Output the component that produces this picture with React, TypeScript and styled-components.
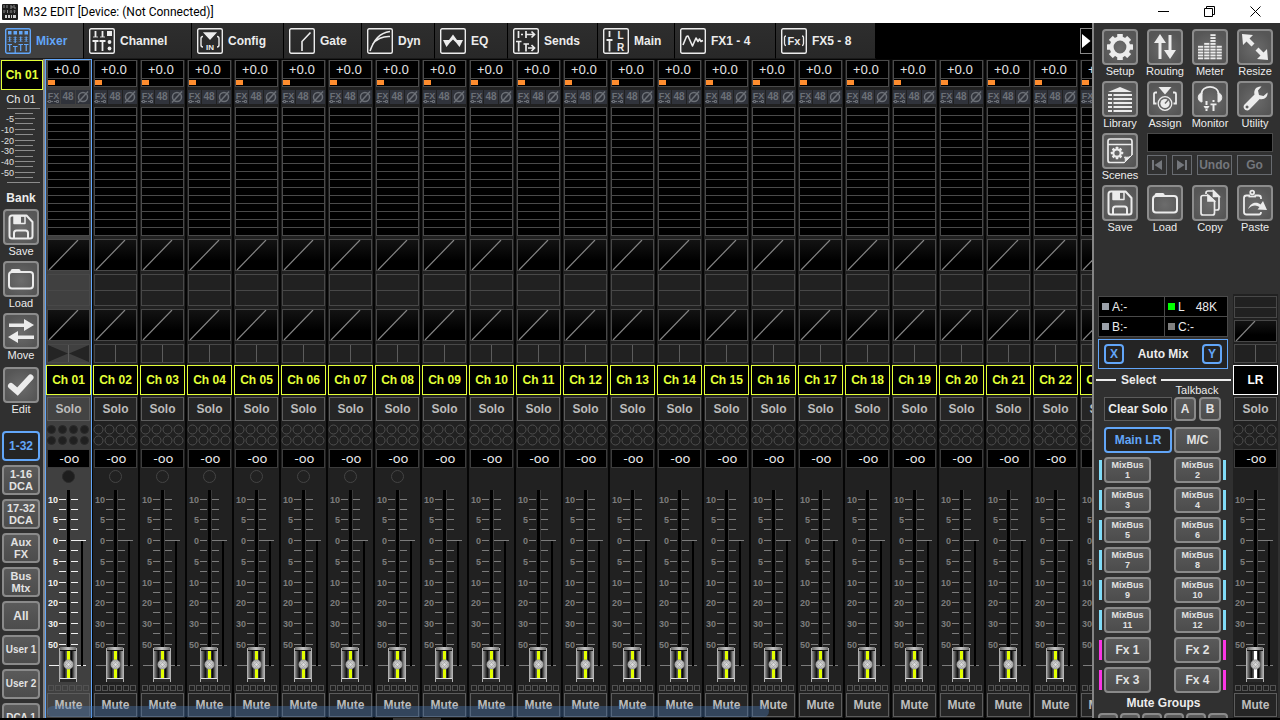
import React from "react";
import styled, { createGlobalStyle, css } from "styled-components";

const sans = '"Liberation Sans", Arial, sans-serif';
const readout = '"Noto Sans", "Open Sans", sans-serif';
const lime = "#e4ff37";
const blue = "#62a6f8";

const GlobalStyle = createGlobalStyle`
  * { box-sizing: border-box; }
  body { margin: 0; background: #000; overflow: hidden; }
  button { padding: 0; margin: 0; border: 0; background: none; color: inherit; font: inherit; cursor: pointer; }
  svg { display: block; }
`;

/* ---------- frame ---------- */

const Window = styled.div`
  display: flex;
  flex-direction: column;
  height: 100vh;
  overflow: hidden;
  background: #000;
  color: #ececec;
  font: bold 12px/14px ${sans};
`;

const TitleBar = styled.header`
  display: flex;
  align-items: center;
  flex: none;
  height: 23px;
  padding: 0 2px;
  gap: 5px;
  background: #fff;
  color: #000;
`;

const Title = styled.h1`
  flex: 1;
  margin: 0;
  font: normal 12px/20px Roboto, "Open Sans", sans-serif;
`;

const WindowButton = styled.button`
  display: grid;
  place-items: center;
  width: 46px;
  height: 20px;
`;

const Body = styled.div`
  display: flex;
  flex: 1;
  min-height: 0;
`;

const Workspace = styled.main`
  display: flex;
  flex-direction: column;
  flex: 1;
  min-width: 0;
`;

const TabBar = styled.nav`
  display: flex;
  flex: none;
  height: 36px;
`;

const Tab = styled.button<{ $width: number; $active?: boolean }>`
  display: flex;
  align-items: center;
  flex: none;
  gap: 5px;
  width: ${(p) => p.$width}px;
  padding-left: 5px;
  border-right: 1px solid #000;
  border-bottom: 1px solid #1a1a1a;
  background: ${(p) => (p.$active ? "#404040" : "linear-gradient(#2e2e2e, #282828)")};
  color: ${(p) => (p.$active ? blue : "#ececec")};
  white-space: nowrap;
`;

const ScrollTabs = styled.button`
  display: grid;
  place-items: center;
  width: 12px;
  height: 26px;
  margin: 5px 0 0 auto;
  border: 1px solid #8a8a8a;
  border-right: 0;
  background: #000;
`;

const Desk = styled.div`
  display: flex;
  flex: 1;
  min-height: 0;
`;

const BottomBar = styled.footer`
  flex: none;
  height: 2px;
  padding-left: 393px;
  background: #000;
`;

const ScrollThumb = styled.div`
  width: 48px;
  height: 2px;
  background: #333;
`;

/* ---------- shared parts ---------- */

const NameBox = styled.div<{ $color?: string }>`
  display: grid;
  place-items: center;
  width: 45px;
  height: 30px;
  border: 1px solid ${(p) => p.$color ?? lime};
  background: #000;
  color: ${(p) => p.$color ?? lime};
  white-space: nowrap;
`;

const Tool = styled.button`
  display: flex;
  flex-direction: column;
  align-items: center;
  width: 36px;
  height: 48px;
  font: normal 11px/12px ${sans};
  white-space: nowrap;
`;

const ToolFace = styled.span`
  display: block;
  flex: none;
  width: 36px;
  height: 36px;
  border: 2px solid #8c8c8c;
  border-radius: 4px;
  background: radial-gradient(circle at 50% 55%, #6c6c6c, #565656 75%);
`;

const Key = styled.button<{ $w: number; $h: number; $on?: boolean; $size?: number }>`
  display: grid;
  place-items: center;
  flex: none;
  width: ${(p) => p.$w}px;
  height: ${(p) => p.$h}px;
  border: 2px solid ${(p) => (p.$on ? blue : "#8a8a8a")};
  border-radius: 4px;
  background: ${(p) => (p.$on ? "#242424" : "linear-gradient(#5a5a5a, #4c4c4c)")};
  color: ${(p) => (p.$on ? blue : "#e2e2e2")};
  font-size: ${(p) => p.$size ?? 12}px;
  line-height: ${(p) => (p.$size === 9 ? 10 : 12)}px;
  white-space: pre;
  text-align: center;
`;

/* ---------- sidebar ---------- */

const Sidebar = styled.aside`
  display: flex;
  flex-direction: column;
  align-items: center;
  flex: none;
  width: 45px;
  padding: 1px 2px 0 1px;
  border-right: 2px solid #858585;
  background: #303030;
  overflow: hidden;

  > * {
    flex: none;
  }
`;

const SideNameBox = styled(NameBox)`
  align-self: flex-start;
  width: 42px;
`;

const SideName = styled.div`
  padding: 2px 0;
  font-weight: normal;
  font-size: 11px;
  line-height: 14px;
  text-align: center;
`;

const BankTitle = styled.h2`
  margin: 7px 0 4px;
  font-size: 12px;
  line-height: 14px;
`;

const Stack = styled.div<{ $gap: number; $top?: number }>`
  display: flex;
  flex-direction: column;
  align-items: center;
  gap: ${(p) => p.$gap}px;
  margin-top: ${(p) => p.$top ?? 0}px;
`;

/* ---------- channel strip ---------- */

const Strips = styled.section`
  position: relative;
  display: flex;
  flex: 1;
  gap: 2px;
  min-width: 0;
  padding: 1px 0 0 1px;
  background: #050505;
  overflow: hidden;
`;

const StripBox = styled.article<{ $selected?: boolean }>`
  display: flex;
  flex-direction: column;
  align-items: center;
  flex: none;
  width: 45px;
  background: ${(p) => (p.$selected ? "#404040" : "#212121")};
  color: #bdbdbd;
  ${(p) => p.$selected && css`box-shadow: 0 0 0 1px ${blue};`}

  > * {
    flex: none;
  }
`;

const Gain = styled.div`
  width: 43px;
  height: 27px;
  border: 1px solid #4a4a4a;
  background: #000;
  color: #e4e4e4;
`;

const GainValue = styled.div`
  height: 17px;
  padding-right: 3px;
  font: normal 13px/16px ${readout};
  text-align: center;
`;

const GainBar = styled.div`
  height: 8px;
  padding-top: 1px;
  border-top: 1px solid #4a4a4a;
`;

const GainFill = styled.div`
  width: 7px;
  height: 5px;
  background: #ff8d2e;
`;

const Flags = styled.div`
  display: grid;
  grid-template-columns: 13px 14px 14px;
  gap: 1px;
  width: 43px;
  height: 14px;
  margin: 3px 0;
  color: #6c7077;
`;

const Flag = styled.div`
  display: grid;
  place-items: center;
  background: #30333b;
  font-size: 10px;
  line-height: 14px;
`;

const Bands = styled.div`
  width: 43px;
  height: 129px;
  border: 1px solid #4a4a4a;
  background: repeating-linear-gradient(#000 0 7px, #4a4a4a 7px 8px);
`;

const Panel = styled.div<{ $h: number; $black?: boolean; $top: number }>`
  width: 43px;
  height: ${(p) => p.$h}px;
  margin-top: ${(p) => p.$top}px;
  border: 1px solid #484848;
  background: ${(p) => (p.$black ? "linear-gradient(#131313, #000 70%)" : "transparent")};
`;

const FlatButton = styled.button`
  display: grid;
  place-items: center;
  width: 43px;
  height: 24px;
  margin: 2px 0;
  border: 1px solid #5c5c5c;
  background: rgba(255, 255, 255, 0.02);
  color: #bdbdbd;
`;

const Level = styled.div`
  width: 43px;
  height: 19px;
  padding-left: 2px;
  border: 1px solid #3c3c3c;
  background: #000;
  color: #ececec;
  font: normal 13px/16px ${readout};
  text-align: center;
`;

const FaderBox = styled.label`
  position: relative;
  display: block;
  width: 45px;
  height: 217px;
`;

const FaderInput = styled.input`
  position: absolute;
  inset: 22px 12px 3px 12px;
  width: 21px;
  height: 192px;
  margin: 0;
  opacity: 0;
  writing-mode: vertical-lr;
  direction: rtl;
`;

const Highlight = styled.div`
  position: absolute;
  left: 2px;
  bottom: 1px;
  width: 69%;
  height: 11px;
  border-radius: 6px;
  background: rgba(72, 118, 176, 0.4);
  pointer-events: none;
`;

/* ---------- control panel ---------- */

const Controls = styled.aside`
  display: flex;
  flex-direction: column;
  flex: none;
  width: 188px;
  border-left: 2px solid #858585;
  background: #303030;
  overflow: hidden;
`;

const ToolGrid = styled.div`
  display: grid;
  grid-template-columns: repeat(4, 36px);
  gap: 4px 9px;
  flex: none;
  height: 271px;
  align-content: start;
  padding: 6px 0 0 8px;
`;

const SceneArea = styled.div`
  grid-column: 2 / -1;
  display: flex;
  flex-direction: column;
  gap: 3px;
`;

const SceneName = styled.output`
  height: 19px;
  border: 1px solid #4a4a4a;
  background: #000;
`;

const Row = styled.div<{ $gap?: number }>`
  display: flex;
  gap: ${(p) => p.$gap ?? 0}px;
`;

const SceneButton = styled.button<{ $w: number }>`
  display: grid;
  place-items: center;
  width: ${(p) => p.$w}px;
  height: 20px;
  border: 1px solid #686b70;
  color: #74777c;
`;

const Lower = styled.div`
  display: flex;
  flex: 1;
  min-height: 0;
`;

const Routing = styled.section`
  flex: none;
  width: 139px;
  padding: 2px 4px 0;
`;

const Status = styled.div`
  display: grid;
  grid-template-columns: 65px 62px;
  grid-auto-rows: 19px;
  gap: 1px;
  width: 130px;
  height: 41px;
  border: 1px solid #4a4a4a;
  background: #4a4a4a;
  font-weight: normal;
`;

const StatusCell = styled.div`
  display: flex;
  align-items: center;
  gap: 3px;
  padding-left: 3px;
  background: #000;
`;

const SampleRate = styled.span`
  margin-left: 8px;
`;

const Led = styled.span<{ $color: string }>`
  width: 7px;
  height: 7px;
  background: ${(p) => p.$color};
`;

const AutoMix = styled.div`
  display: flex;
  align-items: center;
  justify-content: space-between;
  width: 130px;
  height: 30px;
  margin-top: 2px;
  padding: 0 5px;
  border: 1px solid ${blue};
  background: #242424;
`;

const SelectTitle = styled.h2`
  display: flex;
  align-items: center;
  gap: 5px;
  width: 135px;
  margin: 4px 0 0 -2px;
  font-size: 12px;
  line-height: 14px;

  &::before,
  &::after {
    content: "";
    width: 20px;
    height: 2px;
    background: #ececec;
  }
  &::after {
    flex: 1;
  }
`;

const TalkbackTitle = styled.div`
  width: 46px;
  margin: -2px 0 1px 76px;
  font: normal 11px/11px ${sans};
  text-align: center;
`;

const ClearSolo = styled.button`
  width: 68px;
  height: 24px;
  margin-right: 2px;
  border: 1px solid #5c5c5c;
  background: #262626;
  white-space: nowrap;
`;

const KeyRow = styled.div<{ $top: number }>`
  display: flex;
  margin: ${(p) => p.$top}px 0 0 6px;
`;

const BusRow = styled.div`
  display: flex;
  align-items: center;
  justify-content: space-between;
  width: 127px;
  margin: 4px 0 0 1px;
`;

const BusGroup = styled.div`
  display: flex;
  align-items: center;
  gap: 2px;
`;

const BusMark = styled.span<{ $color: string }>`
  width: 3px;
  height: 20px;
  background: ${(p) => p.$color};
`;

const MuteTitle = styled.h2`
  margin: 3px 0 3px;
  font-size: 12px;
  line-height: 14px;
  text-align: center;
`;

/* ---------- drawings ---------- */

type Art = React.ReactNode;

const teeth = (cx: number, cy: number, r: number, w: number, h: number) =>
  [0, 45, 90, 135, 180, 225, 270, 315].map((a) => (
    <rect key={a} x={cx - w / 2} y={cy - r} width={w} height={h} rx="0.5" fill="currentColor" stroke="none" transform={`rotate(${a} ${cx} ${cy})`} />
  ));

const meterBars = [5, 6, 9, 5].flatMap((n, c) =>
  Array.from({ length: n }, (_, r) => <rect key={`${c}-${r}`} x={6 + c * 6.2} y={28.4 - r * 2.9} width="5.2" height="1.9" />)
);

const toolArt: Record<string, Art> = {
  Setup: (
    <g>
      <circle cx="18" cy="18" r="8.4" fill="none" stroke="currentColor" strokeWidth="4" />
      {teeth(18, 18, 13, 5.6, 4)}
    </g>
  ),
  Routing: <path d="M11.5 30V14H7L13 5l6 9h-4.500V30zM21.500 6v15H17l6 9 6-9h-4.500V6z" fill="currentColor" />,
  Meter: <g fill="currentColor">{meterBars}</g>,
  Resize: <path d="M5 5l11 1-3.500 3.500 5 5-3 3-5-5L6 16zM31 31l-11-1 3.500-3.500-5-5 3-3 5 5L30 20z" fill="currentColor" />,
  Library: (
    <g fill="currentColor">
      <path d="M6 11L18 6l12 5z" />
      {[13, 17, 21, 25, 29].map((y) => (
        <path key={y} d={`M6 ${y}h4v1.900h-4zM11.500 ${y}h18.500v1.900h-18.500z`} />
      ))}
    </g>
  ),
  Assign: (
    <g fill="none" stroke="currentColor" strokeWidth="1.800">
      <path d="M11.500 6h13L18 13.500z" fill="currentColor" stroke="none" />
      <circle cx="18" cy="22.500" r="6.800" strokeWidth="1.300" />
      <circle cx="18" cy="22.500" r="4.600" fill="currentColor" stroke="none" />
      <path d="M18 22.500l4-4.500" stroke="#666" strokeWidth="1.300" />
      <path d="M10 11.500H8.500Q7 11.500 7 13v9.500h2.500M26 11.500h1.500q1.500 0 1.500 1.500v9.500h-2.500" />
    </g>
  ),
  Monitor: (
    <g fill="none" stroke="currentColor" strokeWidth="1.600">
      <path d="M9.500 13C9.500 3.500 26.500 3.500 26.500 13" />
      <path d="M10 12c-5 0-5 9 0 9zM26 12c5 0 5 9 0 9z" fill="currentColor" strokeWidth="1" />
      <path d="M14.500 20v4M21.500 23v7M14.500 28v2M21.500 19v2" strokeWidth="2" />
      <path d="M11.500 25h6l-1.500 2.500h-3zM18.500 22.500h6v1.800h-6z" fill="currentColor" stroke="none" />
    </g>
  ),
  Utility: (
    <path
      d="M30.500 11.500c.6 4-2.800 7.500-7.800 6.500L12.500 28.500c-3 3-8-1.500-5-5L17.500 13.500c-1.200-5 2.500-8.800 7-8l-3.500 4 1 4.500 4.500 1zM10 24.500a1.500 1.500 0 1 0 .1 0z"
      fill="currentColor"
      fillRule="evenodd"
    />
  ),
  Scenes: (
    <g fill="none" stroke="currentColor" strokeWidth="1.700">
      <path d="M22 29.500H8q-2 0-2-2V8.500q0-2.500 2-2.500h20q2 0 2 2.500V22M6 11.500h24" />
      <path d="M22 30c2-2 1.500-4 .5-6 3 .5 5.500.5 7.500-2z" fill="currentColor" strokeWidth="1" />
      <circle cx="15" cy="20" r="3.600" strokeWidth="2" />
      {teeth(15, 20, 6.2, 2.6, 2.4)}
    </g>
  ),
  Save: (
    <g fill="none" stroke="currentColor" strokeWidth="2" strokeLinejoin="round">
      <path d="M9 6.500h14.500L29.500 13v14q0 2.500-2.500 2.500H9q-2.500 0-2.500-2.500V9q0-2.500 2.500-2.500z" />
      <path d="M11 29v-5q0-2.500 2.500-2.500h9q2.500 0 2.500 2.500v5" />
      <path d="M11 7v7.500h11V7z" strokeWidth="1.500" />
      <path d="M11 7h7v7.500h-7z" fill="currentColor" stroke="none" />
    </g>
  ),
  Load: (
    <g fill="none" stroke="currentColor" strokeWidth="2">
      <rect x="6" y="11" width="24" height="16.500" rx="3" />
      <path d="M7.500 11q0-3 2-3h6.500q1.500 0 2 3z" fill="currentColor" stroke="none" />
    </g>
  ),
  Copy: (
    <g fill="none" stroke="currentColor" strokeWidth="1.700">
      <path d="M14 9V8q0-2 2-2h5.500l5.500 5.500V23q0 2-2 2h-2.500" />
      <path d="M21.500 6v5.500H27z" fill="currentColor" />
      <path d="M16.500 10.500H11q-2 0-2 2V28q0 2 2 2h9.500q2 0 2-2V16z" />
      <path d="M16 10.500V16h6z" fill="currentColor" />
    </g>
  ),
  Paste: (
    <g fill="none" stroke="currentColor" strokeWidth="1.800">
      <path d="M13 10.500H9.500q-2.500 0-2.500 2.500v14q0 2.500 2.500 2.500H22q2 0 2-2.500M17.500 10.500h4q2.500 0 2.500 2.500v1" />
      <circle cx="15.200" cy="7.500" r="1.900" />
      <path d="M11.500 11.500h7.500" />
      <path d="M11 24c3-7 9-7.500 12.500-4.500L26 16l4 9-9.500-.5 2-2.500C19 19.500 15 20 11 24z" fill="currentColor" stroke="none" />
    </g>
  ),
  Move: <path d="M6 10.500h15V6l10 6-10 6v-4H6zM31 22.500H15V18L5 24l10 6v-4h16z" fill="currentColor" />,
  Edit: <path d="M8 19l6.500 5.500L27.500 10.500" fill="none" stroke="currentColor" strokeWidth="6" strokeLinecap="round" />,
};

const ToolButton = ({ name }: { name: string }) => (
  <Tool type="button">
    <ToolFace>
      <svg width="32" height="32" viewBox="2 2 32 32" aria-hidden="true">
        {toolArt[name]}
      </svg>
    </ToolFace>
    {name}
  </Tool>
);

const glyphText = (x: number, y: number, size: number, t: string) => (
  <text x={x} y={y} fontSize={size} fontFamily="Liberation Sans, sans-serif" fontWeight="bold" textAnchor="middle" fill="currentColor" stroke="none">
    {t}
  </text>
);

const tabs: { name: string; width: number; art: Art }[] = [
  {
    name: "Mixer",
    width: 84,
    art: (
      <g>
        {[3, 8.5, 14, 19.5].map((x, i) => (
          <g key={x}>
            <rect x={x} y="3" width="3.500" height="3.500" fill="currentColor" stroke="none" />
            <path d={`M${x + 1.7} 8.500V${i === 1 ? 15 : 13.5}M${x + 1.7} ${i === 1 ? 19 : 17}v6M${x - 0.5} ${i === 1 ? 18.5 : 16.5}h4.500`} strokeWidth="1.200" />
            <path d={`M${x - 0.3} 9.500h4M${x - 0.3} 11.500h4M${x - 0.3} 13.500h4`} strokeWidth="0.400" />
          </g>
        ))}
      </g>
    ),
  },
  {
    name: "Channel",
    width: 108,
    art: (
      <g strokeWidth="1.800">
        <path d="M6.500 3v6M3.500 13h6M6.500 13v10M13.500 3v6M10.500 13h6M13.500 13v10" />
        <path d="M4 9h5M11 9h5" strokeWidth="0.800" />
        <path d="M18 3h5v5h-5z" fill="currentColor" stroke="none" />
        <circle cx="20.500" cy="14" r="1.900" fill="currentColor" stroke="none" />
        <circle cx="20.500" cy="20.500" r="1.900" fill="currentColor" stroke="none" />
      </g>
    ),
  },
  {
    name: "Config",
    width: 92,
    art: (
      <g>
        <path d="M7.500 5h11L13 11z" fill="currentColor" />
        <path d="M6 8.500Q4 8.500 4 10.500v6.500Q4 19 6 19M20 8.500q2 0 2 2v6.500q0 2-2 2" />
        {glyphText(13, 21.5, 8, "IN")}
      </g>
    ),
  },
  { name: "Gate", width: 78, art: <path d="M13 23v-9.500L21.500 4.500" strokeWidth="1.600" /> },
  { name: "Dyn", width: 73, art: <path d="M3 23C7 12 12 5 23 3.500M5.500 16.500C9 11 16 8 23 8.500" strokeWidth="1.600" /> },
  { name: "EQ", width: 73, art: <path d="M3 12h6l4-5.500L17 12h6l-3.500 7-3.500-4.500L13 11.500l-3 3L6.500 19z" fill="currentColor" stroke="none" /> },
  {
    name: "Sends",
    width: 90,
    art: (
      <g strokeWidth="1.700">
        <path d="M5.500 3v7M8 6.500h2M13 3v7M13 6.500h8M18.500 3.500l3 3-3 3" />
        <path d="M3 13.500h5.500M5.700 13.500v10M10.500 16h5.500M13 16v7.500M15 20h6M18.500 17l3 3-3 3" />
      </g>
    ),
  },
  {
    name: "Main",
    width: 77,
    art: (
      <g>
        <path d="M6.500 3v6M3.500 12h6M6.500 12v11.500" strokeWidth="1.800" />
        {glyphText(17.5, 11, 10, "L")}
        {glyphText(17.5, 22.5, 10, "R")}
      </g>
    ),
  },
  { name: "FX1 - 4", width: 101, art: <path d="M3 17L6.500 8.500l1.500-.5 4.500 10L16 10l2 3.500 1.500-2.500 1.500 2.500 2-1" strokeWidth="1.600" strokeLinejoin="round" /> },
  {
    name: "FX5 - 8",
    width: 100,
    art: (
      <g>
        <path d="M5 8Q3.500 8 3.500 9.500v6Q3.500 17.500 5 17.500M21 8q1.500 0 1.500 1.500v6q0 2-1.500 2" strokeWidth="1.300" />
        {glyphText(13, 17, 11, "Fx")}
      </g>
    ),
  },
];

const AppIcon = () => (
  <svg width="16" height="16" viewBox="0 0 16 16" aria-hidden="true">
    <rect width="16" height="16" rx="1" fill="#1c1c1c" />
    <path d="M2 1v3M5 1v3M8 2h2v2H8M12 1v3h2M2 6v3M5.500 6v3M9 6v3M12.500 6v3" stroke="#8a8a8a" strokeWidth="1" fill="none" />
    <path d="M1 7h3M7.500 8h3M11 7h3" stroke="#555" />
    <path d="M3 12.500h2M6 12.500h2M9 12.500h1M11 12.500h3" stroke="#d0d0d0" strokeWidth="3" />
  </svg>
);

const SharedDefs = () => (
  <svg width="0" height="0" style={{ position: "absolute" }} aria-hidden="true">
    <defs>
      <linearGradient id="cap-metal" x1="0" x2="1" y1="0" y2="0">
        <stop offset="0" stopColor="#c4c4c4" />
        <stop offset="0.1" stopColor="#777" />
        <stop offset="0.3" stopColor="#101010" />
        <stop offset="0.42" stopColor="#5a5a5a" />
        <stop offset="0.58" stopColor="#5a5a5a" />
        <stop offset="0.7" stopColor="#050505" />
        <stop offset="0.88" stopColor="#8e8e8e" />
        <stop offset="1" stopColor="#bdbdbd" />
      </linearGradient>
      <linearGradient id="cap-edge" x1="0" x2="1" y1="0" y2="0">
        <stop offset="0" stopColor="#6a6a6a" />
        <stop offset="0.5" stopColor="#c8c8c8" />
        <stop offset="1" stopColor="#6a6a6a" />
      </linearGradient>
      <radialGradient id="cap-knob">
        <stop offset="0" stopColor="#e2e2e2" />
        <stop offset="0.7" stopColor="#bcbcbc" />
        <stop offset="1" stopColor="#8c8c8c" />
      </radialGradient>
    </defs>
  </svg>
);

const marks: [number, string][] = [
  [32, "10"],
  [52, "5"],
  [73, "0"],
  [94, "5"],
  [115, "10"],
  [135, "20"],
  [156, "30"],
  [177, "50"],
];
const minor = [42, 62, 83, 104, 125, 145, 166];

const Fader = ({ label, lit, dot, stripe }: { label: string; lit?: boolean; dot?: boolean; stripe: string }) => {
  const ink = lit ? "#f0f0f0" : "#7c7c7c";
  return (
    <FaderBox>
      <svg width="45" height="217" viewBox="0 0 45 217" aria-hidden="true">
        {dot && <circle cx="22.500" cy="8.500" r="6" fill={lit ? "#1e1e1e" : "none"} stroke={lit ? "#2a2a2a" : "#444"} />}
        <g fill={ink}>
          {minor.map((y) => (
            <path key={y} d={`M13 ${y - 1}h7v1h-7zM25 ${y - 1}h7v1h-7z`} />
          ))}
          {marks.map(([y]) => (
            <path key={y} d={`M13 ${y - 1}h7v1h-7zM25 ${y - 1}h${y === 73 ? 15 : 7}v1h-${y === 73 ? 15 : 7}z`} />
          ))}
          <rect x="3" y="197" width="37" height="1" />
        </g>
        <g fill={ink} fontFamily='"Liberation Sans", sans-serif' fontSize="9" fontWeight="bold" textAnchor="end">
          {marks.map(([y, t]) => (
            <text key={y} x="12" y={y + 3}>
              {t}
            </text>
          ))}
        </g>
        <rect x="21" y="22" width="3" height="160" fill="#000" />
        {!lit && <rect x="24" y="22" width="1" height="160" fill="#3a3a3a" />}
        <rect x="35" y="73" width="2" height="125" fill="#000" />
        <rect x="13" y="180" width="18" height="34" fill="url(#cap-metal)" />
        <rect x="14" y="179" width="16" height="3" fill="url(#cap-edge)" />
        <rect x="14" y="182" width="16" height="1" fill="#111" />
        <rect x="14" y="210" width="16" height="1" fill="#ddd" />
        <rect x="14" y="211" width="16" height="3" fill="#2a2a2a" />
        <rect x="21" y="183" width="3" height="27" fill={stripe} />
        <circle cx="22.500" cy="196.500" r="5" fill="url(#cap-knob)" />
        <path d="M19 195l5 5M21 193l5 5M26 195l-5 5M24 193l-5 5" stroke="#9a9a9a" strokeWidth="0.500" />
      </svg>
      <FaderInput type="range" min={-90} max={10} defaultValue={-90} aria-label={`${label} level`} />
    </FaderBox>
  );
};

const DotGrid = ({ lit }: { lit?: boolean }) => (
  <svg width="45" height="26" viewBox="0 0 45 26" aria-hidden="true">
    {[6.5, 17.5].flatMap((cy) =>
      [5.5, 16.5, 27.5, 38.5].map((cx) => (
        <circle key={`${cx}-${cy}`} cx={cx} cy={cy} r={lit ? 4 : 4.5} fill={lit ? "#202020" : "none"} stroke={lit ? "#2a2a2a" : "#4e4e4e"} />
      ))
    )}
  </svg>
);

const Squares = () => (
  <svg width="43" height="6" viewBox="0 0 43 6" aria-hidden="true">
    {[1, 8, 15, 22, 29, 36].map((x) => (
      <rect key={x} x={x + 0.5} y="0.500" width="5" height="5" fill="none" stroke="#525252" />
    ))}
  </svg>
);

const Curve = ({ top, h }: { top: number; h: number }) => (
  <Panel $h={h} $top={top} $black>
    <svg width="41" height={h - 2} viewBox={`0 0 41 ${h - 2}`} aria-hidden="true">
      <path d={`M1 ${h - 2}L${h - 2} 0`} stroke="#858585" strokeWidth="1.200" />
    </svg>
  </Panel>
);

const MidLine = ({ top, h }: { top: number; h: number }) => (
  <Panel $h={h} $top={top}>
    <svg width="41" height={h - 2} viewBox={`0 0 41 ${h - 2}`} aria-hidden="true">
      <rect y={h / 2 - 1} width="41" height="1" fill="#484848" />
    </svg>
  </Panel>
);

const Pan = ({ top, lit }: { top: number; lit?: boolean }) => (
  <Panel $h={19} $top={top}>
    <svg width="41" height="17" viewBox="0 0 41 17" aria-hidden="true">
      {lit && <path d="M0 0L20 8.500 0 17zM41 0L21 8.500 41 17z" fill="#242424" />}
      <rect x="20" width="1" height="17" fill="#5c5c5c" />
    </svg>
  </Panel>
);

const StripTail = ({ name, color, lit, dot, stripe }: { name: string; color?: string; lit?: boolean; dot?: boolean; stripe: string }) => (
  <>
    <Pan top={name === "LR" ? 2 : 3} lit={lit} />
    <Stack $gap={0} $top={2}>
      <NameBox $color={color}>{name}</NameBox>
      <FlatButton type="button">Solo</FlatButton>
      <DotGrid lit={lit} />
    </Stack>
    <Level>-oo</Level>
    <Fader label={name} lit={lit} dot={dot} stripe={stripe} />
    <Squares />
    <FlatButton type="button">Mute</FlatButton>
  </>
);

const ChannelStrip = ({ index }: { index: number }) => {
  const name = `Ch ${String(index).padStart(2, "0")}`;
  const lit = index === 1;
  return (
    <StripBox $selected={lit} aria-label={name}>
      <Gain>
        <GainValue>+0.0</GainValue>
        <GainBar>
          <GainFill />
        </GainBar>
      </Gain>
      <Flags>
        <Flag>
          <svg width="13" height="14" viewBox="0 0 13 14" aria-hidden="true">
            {glyphText(6.5, 8.5, 9, "FX")}
            <path d="M1.500 10.500h2v2h-2zM9.500 10.500h2v2h-2zM0 11.500h1M4 11.500h2M7 11.500h2" stroke="currentColor" fill="none" />
          </svg>
        </Flag>
        <Flag>48</Flag>
        <Flag>
          <svg width="14" height="14" viewBox="0 0 14 14" aria-hidden="true">
            <circle cx="7" cy="7" r="4.500" fill="none" stroke="currentColor" strokeWidth="1.500" />
            <path d="M2 12.500L12 1.500" stroke="currentColor" strokeWidth="1.500" />
          </svg>
        </Flag>
      </Flags>
      <Bands />
      <Curve top={3} h={32} />
      <MidLine top={3} h={32} />
      <Curve top={3} h={32} />
      <StripTail name={name} lit={lit} dot={index <= 8} stripe="#e2ff00" />
    </StripBox>
  );
};

const MeterScale = () => (
  <svg width="40" height="76" viewBox="0 0 40 76" aria-hidden="true">
    <g fill="#8c8c8c">
      <rect x="6" y="0" width="33" height="1" />
      <rect x="6" y="74" width="33" height="1" />
      {[10, 21, 32, 42, 53, 64].map((y) => (
        <rect key={y} x="14" y={y} width="20" height="1" />
      ))}
      {[5, 15, 26, 37, 48, 58, 69].map((y) => (
        <rect key={y} x="14" y={y} width="18" height="1" />
      ))}
    </g>
    <g fill="#e0e0e0" fontFamily="Liberation Sans, sans-serif" fontSize="9" fontWeight="normal" textAnchor="end">
      {[
        ["-5", 14],
        ["-10", 25],
        ["-20", 36],
        ["-30", 46],
        ["-40", 57],
        ["-50", 68],
      ].map(([t, y]) => (
        <text key={t} x="13" y={y}>
          {t}
        </text>
      ))}
    </g>
  </svg>
);

const banks = ["1-32", "1-16\nDCA", "17-32\nDCA", "Aux\nFX", "Bus\nMtx", "All", "User 1", "User 2", "DCA 1"];

const bankSize = (b: string) => {
  if (b === "1-32" || b === "All") return 12;
  return b.includes("\n") ? 11 : 10;
};

const Bus = ({ label, side }: { label: string; side: "left" | "right" }) => {
  const fx = label.startsWith("Fx");
  const mark = <BusMark $color={fx ? "#f935e4" : "#80dcf8"} />;
  return (
    <BusGroup>
      {side === "left" && mark}
      <Key type="button" $w={47} $h={26} $size={fx ? 12 : 9}>
        {label}
      </Key>
      {side === "right" && mark}
    </BusGroup>
  );
};

const busRows = [1, 3, 5, 7, 9, 11].map((n) => [`MixBus\n${n}`, `MixBus\n${n + 1}`]).concat([
  ["Fx 1", "Fx 2"],
  ["Fx 3", "Fx 4"],
]);

export default function App() {
  return (
    <Window>
      <GlobalStyle />
      <SharedDefs />
      <TitleBar>
        <AppIcon />
        <Title>M32 EDIT [Device: (Not Connected)]</Title>
        <Row>
          <WindowButton type="button" aria-label="Minimize">
            <svg width="11" height="11" viewBox="0 0 11 11">
              <path d="M0 5.500h11" stroke="#000" />
            </svg>
          </WindowButton>
          <WindowButton type="button" aria-label="Restore">
            <svg width="11" height="11" viewBox="0 0 11 11" fill="none" stroke="#000">
              <path d="M.5 2.500h8v8h-8zM2.500 2.500v-2h8v8h-2" />
            </svg>
          </WindowButton>
          <WindowButton type="button" aria-label="Close">
            <svg width="11" height="11" viewBox="0 0 11 11" stroke="#000">
              <path d="M.5.5l10 10M10.500.5l-10 10" />
            </svg>
          </WindowButton>
        </Row>
      </TitleBar>

      <Body>
        <Workspace>
          <TabBar>
            {tabs.map((t, i) => (
              <Tab key={t.name} type="button" $width={t.width} $active={i === 0}>
                <svg width="26" height="26" viewBox="0 0 26 26" fill="none" stroke="currentColor" strokeWidth="1.400" aria-hidden="true">
                  <rect x="0.700" y="0.700" width="24.600" height="24.600" rx="1.500" />
                  {t.art}
                </svg>
                {t.name}
              </Tab>
            ))}
            <ScrollTabs type="button" aria-label="More tabs">
              <svg width="9" height="14" viewBox="0 0 9 14">
                <path d="M0 0l8.500 7L0 14z" fill="#fff" />
              </svg>
            </ScrollTabs>
          </TabBar>
          <Desk>
            <Sidebar>
              <SideNameBox>Ch 01</SideNameBox>
              <SideName>Ch 01</SideName>
              <MeterScale />
              <BankTitle>Bank</BankTitle>
              <Stack $gap={4}>
                <ToolButton name="Save" />
                <ToolButton name="Load" />
                <ToolButton name="Move" />
              </Stack>
              <Stack $gap={4} $top={6}>
                <ToolButton name="Edit" />
              </Stack>
              <Stack $gap={4} $top={16}>
                {banks.map((b, i) => (
                  <Key key={b} type="button" $w={38} $h={30} $on={i === 0} $size={bankSize(b)}>
                    {b}
                  </Key>
                ))}
              </Stack>
            </Sidebar>
            <Strips>
              {Array.from({ length: 23 }, (_, i) => (
                <ChannelStrip key={i} index={i + 1} />
              ))}
              <Highlight />
            </Strips>
          </Desk>
        </Workspace>

        <Controls>
          <ToolGrid>
            {["Setup", "Routing", "Meter", "Resize", "Library", "Assign", "Monitor", "Utility", "Scenes"].map((n) => (
              <ToolButton key={n} name={n} />
            ))}
            <SceneArea>
              <SceneName aria-label="Current scene" />
              <Row $gap={5}>
                <SceneButton type="button" $w={20} aria-label="Previous scene">
                  <svg width="10" height="10" viewBox="0 0 10 10" fill="currentColor">
                    <path d="M0 0h2v10H0zM10 0v10L2.500 5z" />
                  </svg>
                </SceneButton>
                <SceneButton type="button" $w={20} aria-label="Next scene">
                  <svg width="10" height="10" viewBox="0 0 10 10" fill="currentColor">
                    <path d="M8 0h2v10H8zM0 0v10l7.500-5z" />
                  </svg>
                </SceneButton>
                <SceneButton type="button" $w={35}>
                  Undo
                </SceneButton>
                <SceneButton type="button" $w={35}>
                  Go
                </SceneButton>
              </Row>
            </SceneArea>
            {["Save", "Load", "Copy", "Paste"].map((n) => (
              <ToolButton key={n} name={n} />
            ))}
          </ToolGrid>

          <Lower>
            <Routing>
              <Status>
                <StatusCell>
                  <Led $color="#9aa0a8" />
                  A:-
                </StatusCell>
                <StatusCell>
                  <Led $color="#00ff00" />
                  L<SampleRate>48K</SampleRate>
                </StatusCell>
                <StatusCell>
                  <Led $color="#9aa0a8" />
                  B:-
                </StatusCell>
                <StatusCell>
                  <Led $color="#808080" />
                  C:-
                </StatusCell>
              </Status>
              <AutoMix>
                <Key type="button" $w={20} $h={20} $on>
                  X
                </Key>
                Auto Mix
                <Key type="button" $w={20} $h={20} $on>
                  Y
                </Key>
              </AutoMix>
              <SelectTitle>Select</SelectTitle>
              <TalkbackTitle>Talkback</TalkbackTitle>
              <KeyRow $top={0}>
                <ClearSolo type="button">Clear Solo</ClearSolo>
                <Row $gap={3}>
                  <Key type="button" $w={22} $h={24}>
                    A
                  </Key>
                  <Key type="button" $w={22} $h={24}>
                    B
                  </Key>
                </Row>
              </KeyRow>
              <KeyRow $top={6}>
                <Row $gap={2}>
                  <Key type="button" $w={68} $h={26} $on>
                    Main LR
                  </Key>
                  <Key type="button" $w={47} $h={26}>
                    M/C
                  </Key>
                </Row>
              </KeyRow>
              {busRows.map(([l, r]) => (
                <BusRow key={l}>
                  <Bus label={l} side="left" />
                  <Bus label={r} side="right" />
                </BusRow>
              ))}
              <MuteTitle>Mute Groups</MuteTitle>
              <Row $gap={2}>
                {[1, 2, 3, 4, 5, 6].map((n) => (
                  <Key key={n} type="button" $w={20} $h={20}>
                    {n}
                  </Key>
                ))}
              </Row>
            </Routing>
            <StripBox aria-label="LR">
              <MidLine top={2} h={22} />
              <Curve top={2} h={22} />
              <StripTail name="LR" color="#ffffff" stripe="#ffffff" />
            </StripBox>
          </Lower>
        </Controls>
      </Body>
      <BottomBar>
        <ScrollThumb />
      </BottomBar>
    </Window>
  );
}
